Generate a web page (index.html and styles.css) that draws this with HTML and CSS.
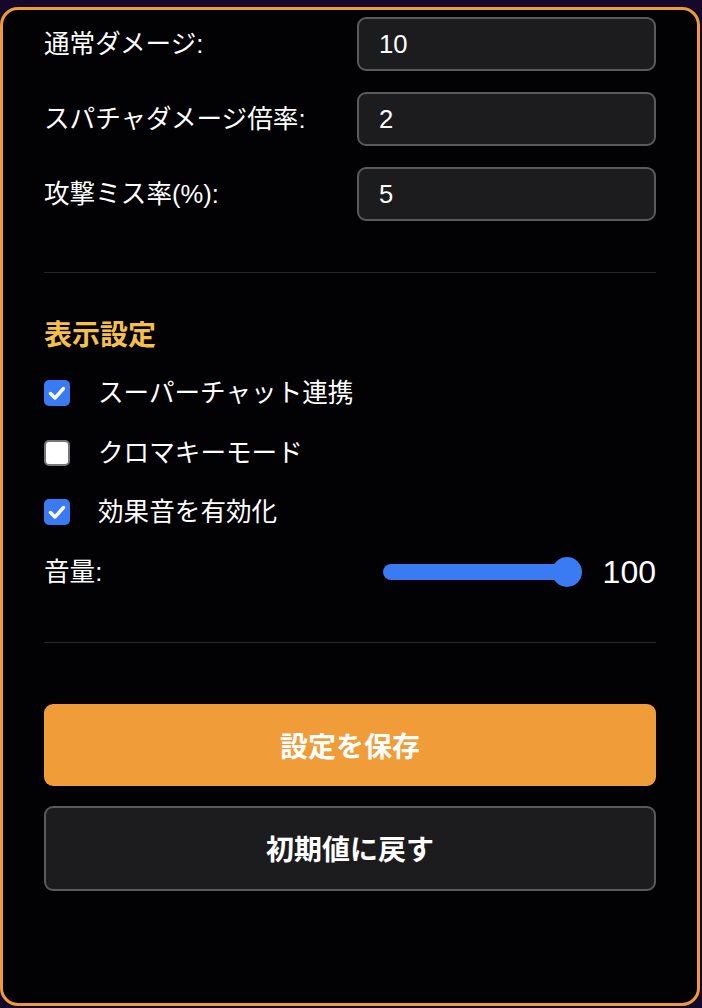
FILE: index.html
```html
<!DOCTYPE html>
<html lang="ja">
<head>
<meta charset="utf-8">
<title>設定</title>
<link rel="stylesheet" href="styles.css">
</head>
<body>
<div class="panel">
  <div class="fields">
    <label class="field">
      <span class="label">通常ダメージ:</span>
      <input class="num" type="text" value="10">
    </label>
    <label class="field">
      <span class="label">スパチャダメージ倍率:</span>
      <input class="num" type="text" value="2">
    </label>
    <label class="field">
      <span class="label">攻撃ミス率(%):</span>
      <input class="num" type="text" value="5">
    </label>
  </div>

  <hr class="divider first">

  <h2 class="section-title">表示設定</h2>
  <div class="options">
    <div class="check-row">
      <span class="box checked"><svg viewBox="0 0 26 26" width="26" height="26"><path d="M6.5 13.5 L11 18 L19.5 8.5" fill="none" stroke="#fff" stroke-width="3.4" stroke-linecap="round" stroke-linejoin="round"/></svg></span>
      <span class="check-text">スーパーチャット連携</span>
    </div>
    <div class="check-row">
      <span class="box"></span>
      <span class="check-text">クロマキーモード</span>
    </div>
    <div class="check-row">
      <span class="box checked"><svg viewBox="0 0 26 26" width="26" height="26"><path d="M6.5 13.5 L11 18 L19.5 8.5" fill="none" stroke="#fff" stroke-width="3.4" stroke-linecap="round" stroke-linejoin="round"/></svg></span>
      <span class="check-text">効果音を有効化</span>
    </div>
    <div class="volume-row">
      <span class="label">音量:</span>
      <div class="volume-ctrl">
        <div class="slider"><div class="track"></div><div class="thumb"></div></div>
        <span class="vol-value">100</span>
      </div>
    </div>
  </div>

  <hr class="divider second">

  <div class="actions">
    <button class="btn save">設定を保存</button>
    <button class="btn reset">初期値に戻す</button>
  </div>
</div>
</body>
</html>
```

FILE: styles.css
```css
* { box-sizing: border-box; }

html, body {
  margin: 0;
  padding: 0;
}

body {
  background: #16082a;
  font-family: "Liberation Sans", "Noto Sans CJK JP", sans-serif;
  color: #fff;
  width: 702px;
  height: 1008px;
  overflow: hidden;
}

.panel {
  margin: 7px 0 0 0;
  width: 700px;
  height: 999px;
  border: 3px solid #f09a3a;
  border-radius: 18px;
  background: #020103;
  padding: 7px 41px 0 41px;
}

.fields {
  display: flex;
  flex-direction: column;
  gap: 21px;
}

.field {
  display: grid;
  grid-template-columns: 1fr 299px;
  align-items: center;
}

.label {
  font-size: 25.6px;
  line-height: 32px;
  color: #fff;
}

.num {
  height: 54px;
  width: 100%;
  background: #1c1c1e;
  border: 2px solid #5a5a5e;
  border-radius: 9px;
  color: #fff;
  font-family: "Liberation Sans", sans-serif;
  font-size: 25.6px;
  padding: 0 20px;
  outline: none;
}

.divider {
  border: none;
  height: 1px;
  background: #26252b;
  margin: 0;
}
.divider.first { margin-top: 51px; }
.divider.second { margin-top: 55px; }

.section-title {
  margin: 48px 0 27px 0;
  font-size: 28px;
  line-height: 30px;
  font-weight: 700;
  color: #f5c048;
}

.options {
  display: flex;
  flex-direction: column;
  gap: 29.5px;
}

.check-row {
  display: flex;
  align-items: center;
  height: 30px;
}

.box {
  width: 26px;
  height: 26px;
  border-radius: 5px;
  background: #fff;
  border: 2px solid #767676;
  flex: none;
  display: flex;
}
.box.checked {
  background: #3a7af3;
  border: none;
}

.check-text {
  margin-left: 28px;
  font-size: 25.6px;
  line-height: 30px;
}

.volume-row {
  display: flex;
  align-items: center;
  justify-content: space-between;
  height: 30px;
}

.volume-ctrl {
  display: flex;
  align-items: center;
  gap: 21px;
}

.slider {
  position: relative;
  width: 199px;
  height: 30px;
}
.track {
  position: absolute;
  left: 0;
  right: 2px;
  top: 7px;
  height: 16px;
  border-radius: 8px;
  background: #3a7af3;
}
.thumb {
  position: absolute;
  right: 0;
  top: 0;
  width: 30px;
  height: 30px;
  border-radius: 50%;
  background: #3a7af3;
}

.vol-value {
  font-family: "Liberation Sans", sans-serif;
  font-size: 32px;
  line-height: 32px;
}

.actions {
  margin-top: 61px;
  display: flex;
  flex-direction: column;
  gap: 20px;
}

.btn {
  width: 100%;
  height: 83px;
  border-radius: 9px;
  font-family: "Liberation Sans", "Noto Sans CJK JP", sans-serif;
  font-size: 28px;
  font-weight: 700;
  color: #fff;
  cursor: pointer;
}
.btn.save {
  background: #f09c39;
  border: none;
  height: 82px;
}
.btn.reset {
  background: #1c1c1e;
  border: 2px solid #5a5a5e;
  height: 85px;
}
```
